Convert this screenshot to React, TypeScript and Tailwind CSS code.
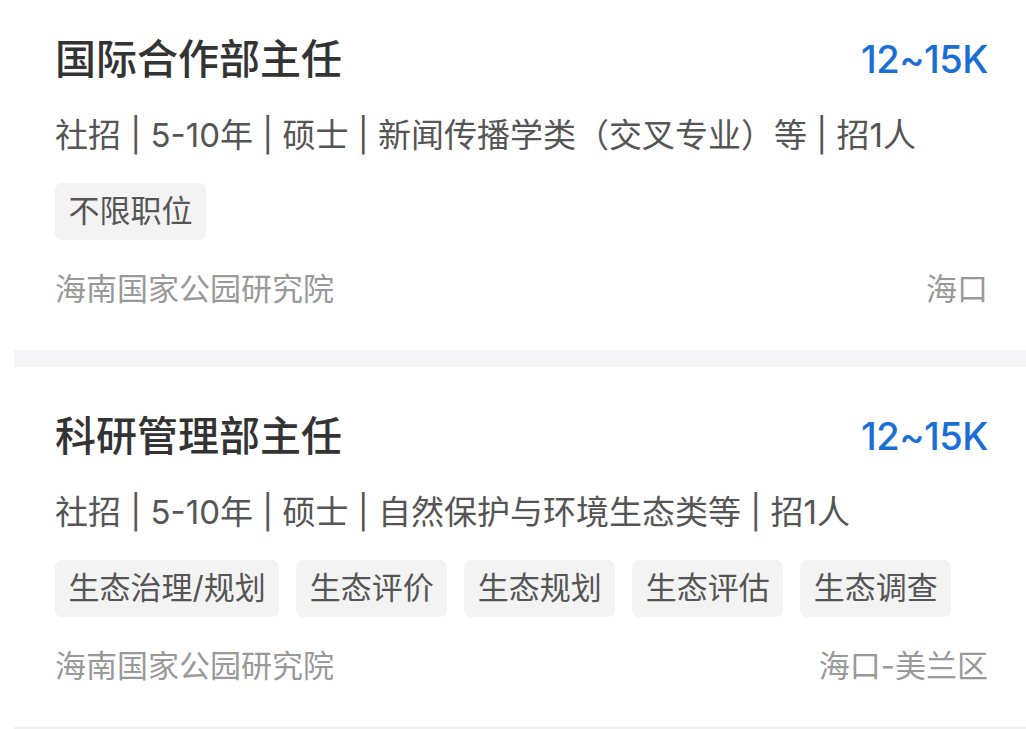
import React from 'react';

type Job = {
  title: string;
  salary: string;
  meta: string;
  tags: string[];
  company: string;
  location: string;
};

const jobs: Job[] = [
  {
    title: '国际合作部主任',
    salary: '12~15K',
    meta: '社招 | 5-10年 | 硕士 | 新闻传播学类（交叉专业）等 | 招1人',
    tags: ['不限职位'],
    company: '海南国家公园研究院',
    location: '海口',
  },
  {
    title: '科研管理部主任',
    salary: '12~15K',
    meta: '社招 | 5-10年 | 硕士 | 自然保护与环境生态类等 | 招1人',
    tags: ['生态治理/规划', '生态评价', '生态规划', '生态评估', '生态调查'],
    company: '海南国家公园研究院',
    location: '海口-美兰区',
  },
];

const font = { fontFamily: 'Inter, "Noto Sans CJK SC", sans-serif' };

const JobCard: React.FC<{ job: Job; first?: boolean }> = ({ job, first }) => (
  <div className={`flex flex-col pl-[55px] pr-[38px] ${first ? 'pt-[35px] pb-[41px]' : 'pt-[45px] pb-[41px]'}`}>
    <div className="flex items-center justify-between">
      <h2 className="text-[41px] leading-[48px] font-medium text-[#333333]">{job.title}</h2>
      <span className="text-[38px] leading-[48px] font-medium text-[#1a6fd6] tracking-[-0.5px]">{job.salary}</span>
    </div>
    <p className="mt-[32px] text-[33px] leading-[40px] text-[#555555]">{job.meta}</p>
    <div className="mt-[28px] flex flex-wrap gap-[17px]">
      {job.tags.map(tag => (
        <span
          key={tag}
          className="h-[57px] px-[13.5px] flex items-center rounded-[7px] bg-[#f3f3f3] text-[31px] text-[#555555]"
        >
          {tag}
        </span>
      ))}
    </div>
    <div className="mt-[29px] flex items-center justify-between text-[31px] leading-[40px] text-[#999999]">
      <span>{job.company}</span>
      <span>{job.location}</span>
    </div>
  </div>
);

const App: React.FC = () => {
  return (
    <div className="w-[1026px] h-[729px] bg-white overflow-hidden" style={font}>
      <JobCard job={jobs[0]} first />
      <div className="ml-[14px] h-[17px] bg-[#f5f5f8]"></div>
      <JobCard job={jobs[1]} />
      <div className="ml-[14px] h-[2px] bg-[#f0f0f0]"></div>
    </div>
  );
};

export default App;
